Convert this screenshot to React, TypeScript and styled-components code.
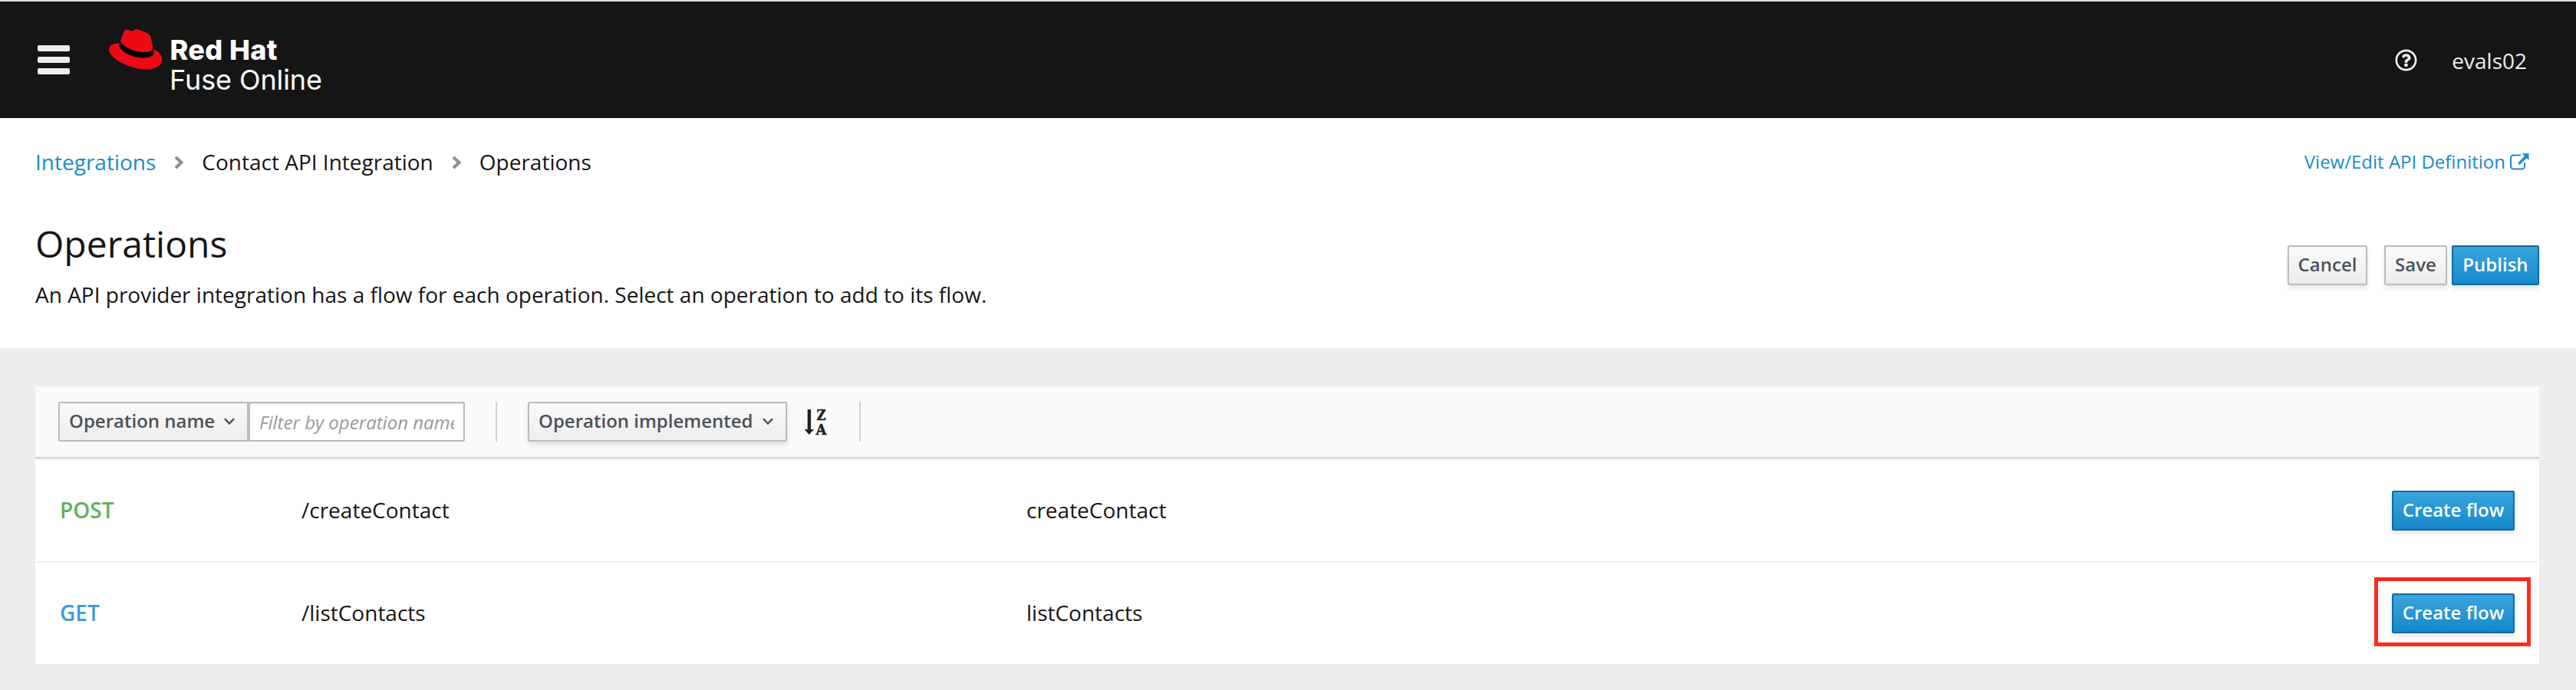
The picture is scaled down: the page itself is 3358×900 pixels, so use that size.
import React from 'react';
import styled, { createGlobalStyle, css } from 'styled-components';
import { FaRegQuestionCircle } from 'react-icons/fa';

const GlobalStyle = createGlobalStyle`
  *, *::before, *::after { box-sizing: border-box; }
  body {
    margin: 0;
    background: #ededed;
    color: #151515;
    font-family: "Open Sans", "Noto Sans", sans-serif;
    font-size: 28px;
    line-height: 42px;
  }
  h1, p { margin: 0; font-weight: 400; }
  button, input { font-family: inherit; margin: 0; }
  svg { display: block; flex: none; }
`;

const Page = styled.div`
  height: 900px;
  overflow: hidden;
`;

const Masthead = styled.header`
  display: flex;
  align-items: center;
  height: 154px;
  padding: 0 64px 0 49px;
  border-top: 2px solid #dcdce4;
  background: #151515;
  color: #ededed;
`;

const MenuButton = styled.div`
  display: flex;
  flex-direction: column;
  gap: 7px;
  width: 42px;
  margin-right: 51px;
`;

const MenuBar = styled.span`
  height: 8px;
  border-radius: 2px;
  background: #ededed;
`;

const Tools = styled.div`
  display: flex;
  align-items: center;
  margin-left: auto;
`;

const UserName = styled.span`
  margin-left: 45px;
  padding-top: 2px;
`;

const Intro = styled.section`
  height: 300px;
  padding: 36px 48px 0 46px;
  background: #fff;
`;

const TopLine = styled.div`
  display: flex;
  justify-content: space-between;
  padding-right: 13px;
`;

const Breadcrumb = styled.nav`
  display: flex;
  align-items: center;
`;

const CrumbLink = styled.a`
  color: #1a8bcd;
`;

const DefinitionLink = styled.a`
  display: flex;
  align-items: center;
  gap: 6px;
  font-size: 24px;
  color: #1a8bcd;
`;

const TitleRow = styled.div`
  display: flex;
  justify-content: space-between;
  margin-top: 55px;
`;

const Title = styled.h1`
  font-size: 48px;
  line-height: 62px;
`;

const Description = styled.p`
  margin-top: 14px;
`;

const Actions = styled.div`
  display: flex;
  margin-top: 33px;
`;

const Button = styled.button<{ $primary?: boolean; $flat?: boolean; $width: number; $gap?: number }>`
  display: flex;
  align-items: center;
  justify-content: center;
  width: ${(p) => p.$width}px;
  height: 52px;
  margin-left: ${(p) => p.$gap ?? 0}px;
  padding: 0 0 3px;
  border: 2px solid #bbb;
  border-radius: 2px;
  background: linear-gradient(#fafafa, #ededed);
  color: #4d5258;
  font-size: 24px;
  font-weight: 600;
  white-space: nowrap;
  box-shadow: ${(p) => (p.$flat ? 'none' : '0 4px 6px rgba(3, 3, 3, 0.1)')};
  ${(p) =>
    p.$primary &&
    css`
      border-color: #0f6aa3;
      background: linear-gradient(#39a5dc, #1688cc);
      color: #fff;
    `}
`;

const Card = styled.main`
  margin: 50px 48px 0 46px;
  background: #fff;
`;

const Toolbar = styled.div`
  display: flex;
  height: 94px;
  padding: 20px 30px;
  border-bottom: 2px solid #d1d1d1;
  background: #fafafa;
`;

const Dropdown = styled(Button)`
  justify-content: flex-start;
  padding-left: 12px;
`;

const FilterInput = styled.input`
  width: 282px;
  height: 52px;
  padding: 0 12px;
  border: 2px solid #bbb;
  border-radius: 0 2px 2px 0;
  background: #fff;
  box-shadow: inset 0 2px 2px rgba(3, 3, 3, 0.075);
  font-size: 24px;
  &::placeholder {
    color: #999;
    font-style: italic;
    opacity: 1;
  }
`;

const Separator = styled.span`
  width: 2px;
  height: 52px;
  margin: 0 40px;
  background: #d1d1d1;
`;

const SortIcon = styled.svg`
  margin-left: 22px;
`;

const List = styled.div`
  border: 2px solid #fff;
  border-top-color: #ededed;
  border-bottom: 0;
`;

const Row = styled.div`
  display: grid;
  grid-template-columns: 315px 945px 1fr auto;
  align-items: center;
  height: 132px;
  padding: 0 30px;
  & + & {
    height: 134px;
    border-top: 2px solid #ededed;
  }
`;

const Cell = styled.span<{ $color?: string }>`
  padding-bottom: 2px;
  color: ${(p) => p.$color ?? 'inherit'};
  font-weight: ${(p) => (p.$color ? 600 : 400)};
`;

const ActionCell = styled.div`
  position: relative;
`;

const Highlight = styled.span`
  position: absolute;
  left: -23px;
  top: -21px;
  width: 204px;
  height: 90px;
  border: 5px solid #ff2a1c;
`;

const Logo = () => (
  <svg width="290" height="110" viewBox="142 23 290 110">
    <g transform="translate(142 29.5) scale(2.885)">
      <path
        fill="#000"
        d="M20.11 11.951c.218 1.032.218 1.14.218 1.277 0 1.765-1.984 2.745-4.593 2.745-5.895.004-11.06-3.451-11.06-5.734a2.326 2.326 0 0 1 .19-.925L5.5 8l14.4 3z"
      />
      <path
        fill="#ee0a14"
        d="M16.009 13.386c1.577 0 3.86-.326 3.86-2.202a1.765 1.765 0 0 0-.04-.431l-.94-4.08c-.216-.898-.406-1.305-1.982-2.093-1.223-.625-3.888-1.658-4.676-1.658-.733 0-.947.946-1.822.946-.842 0-1.467-.706-2.255-.706-.757 0-1.25.515-1.63 1.576 0 0-1.06 2.99-1.197 3.424a.81.81 0 0 0-.028.245c0 1.162 4.577 4.974 10.71 4.974m4.101-1.435c.218 1.032.218 1.14.218 1.277 0 1.765-1.984 2.745-4.593 2.745-5.895.004-11.06-3.451-11.06-5.734a2.326 2.326 0 0 1 .19-.925C2.746 9.415 0 9.794 0 12.217c0 3.969 9.405 8.861 16.851 8.861 5.71 0 7.149-2.582 7.149-4.62 0-1.605-1.387-3.425-3.887-4.512"
      />
    </g>
    <g fill="#fff" fontFamily="Inter, sans-serif" fontSize="36">
      <text x="221.500" y="78" fontWeight="800" textLength="140">Red Hat</text>
      <text x="221" y="117" textLength="199">Fuse Online</text>
    </g>
  </svg>
);

const CrumbDivider = styled.svg`
  margin: 1px 23px 0 24px;
`;

const CrumbChevron = () => (
  <CrumbDivider width="13" height="18" viewBox="0 0 13 18" fill="none" stroke="#8b8d8f" strokeWidth="4">
    <path d="M2 2l7.5 7L2 16" />
  </CrumbDivider>
);

const CaretIcon = styled.svg`
  margin: 3px 0 0 12px;
`;

const Caret = () => (
  <CaretIcon width="14" height="10" viewBox="0 0 14 10" fill="none" stroke="#4d5258" strokeWidth="2.4">
    <path d="M1 1.2l6 6.3 6-6.3" />
  </CaretIcon>
);

const ExternalLink = () => (
  <svg width="25" height="22" viewBox="0 0 25 22">
    <path
      d="M14 2.500H4.500a3.500 3.500 0 0 0-3.500 3.500v11a3.500 3.500 0 0 0 3.500 3.500h11a3.500 3.500 0 0 0 3.500-3.500v-5"
      fill="none"
      stroke="#1a8bcd"
      strokeWidth="2"
    />
    <path d="M15.500 .3h9v8.700l-3-2.700-9 8.700-2.300-2.200 8.800-9.200z" fill="#1a8bcd" />
  </svg>
);

const operations = [
  { method: 'POST', color: '#63b05c', path: '/createContact', name: 'createContact' },
  { method: 'GET', color: '#3f9ad6', path: '/listContacts', name: 'listContacts', highlighted: true },
];

export default function App() {
  return (
    <Page>
      <GlobalStyle />
      <Masthead>
        <MenuButton>
          <MenuBar />
          <MenuBar />
          <MenuBar />
        </MenuButton>
        <Logo />
        <Tools>
          <FaRegQuestionCircle size={29} />
          <UserName>evals02</UserName>
        </Tools>
      </Masthead>
      <Intro>
        <TopLine>
          <Breadcrumb>
            <CrumbLink>Integrations</CrumbLink>
            <CrumbChevron />
            <span>Contact API Integration</span>
            <CrumbChevron />
            <span>Operations</span>
          </Breadcrumb>
          <DefinitionLink>
            View/Edit API Definition
            <ExternalLink />
          </DefinitionLink>
        </TopLine>
        <TitleRow>
          <div>
            <Title>Operations</Title>
            <Description>
              An API provider integration has a flow for each operation. Select an operation to add to its flow.
            </Description>
          </div>
          <Actions>
            <Button $width={104}>Cancel</Button>
            <Button $width={82} $gap={22}>Save</Button>
            <Button $width={114} $gap={6} $primary>Publish</Button>
          </Actions>
        </TitleRow>
      </Intro>
      <Card>
        <Toolbar>
          <Dropdown $width={248} $flat>
            Operation name
            <Caret />
          </Dropdown>
          <FilterInput placeholder="Filter by operation name" />
          <Separator />
          <Dropdown $width={338}>
            Operation implemented
            <Caret />
          </Dropdown>
          <SortIcon width="32" height="52" viewBox="0 -8 32 52" fill="#222">
            <path d="M4.700 3q0-1 1-1h2.400q1 0 1 1v25h4l-6.300 7-6.300-7h4.200z" />
            <g fontFamily="DejaVu Serif, serif" fontSize="19" fontWeight="700" stroke="#222" strokeWidth="0.5">
              <text x="16.500" y="16" textLength="12" lengthAdjust="spacingAndGlyphs">Z</text>
              <text x="15.500" y="35" textLength="14" lengthAdjust="spacingAndGlyphs">A</text>
            </g>
          </SortIcon>
          <Separator />
        </Toolbar>
        <List>
          {operations.map((op) => (
            <Row key={op.name}>
              <Cell $color={op.color}>{op.method}</Cell>
              <Cell>{op.path}</Cell>
              <Cell>{op.name}</Cell>
              <ActionCell>
                <Button $width={160} $primary>Create flow</Button>
                {op.highlighted && <Highlight />}
              </ActionCell>
            </Row>
          ))}
        </List>
      </Card>
    </Page>
  );
}
